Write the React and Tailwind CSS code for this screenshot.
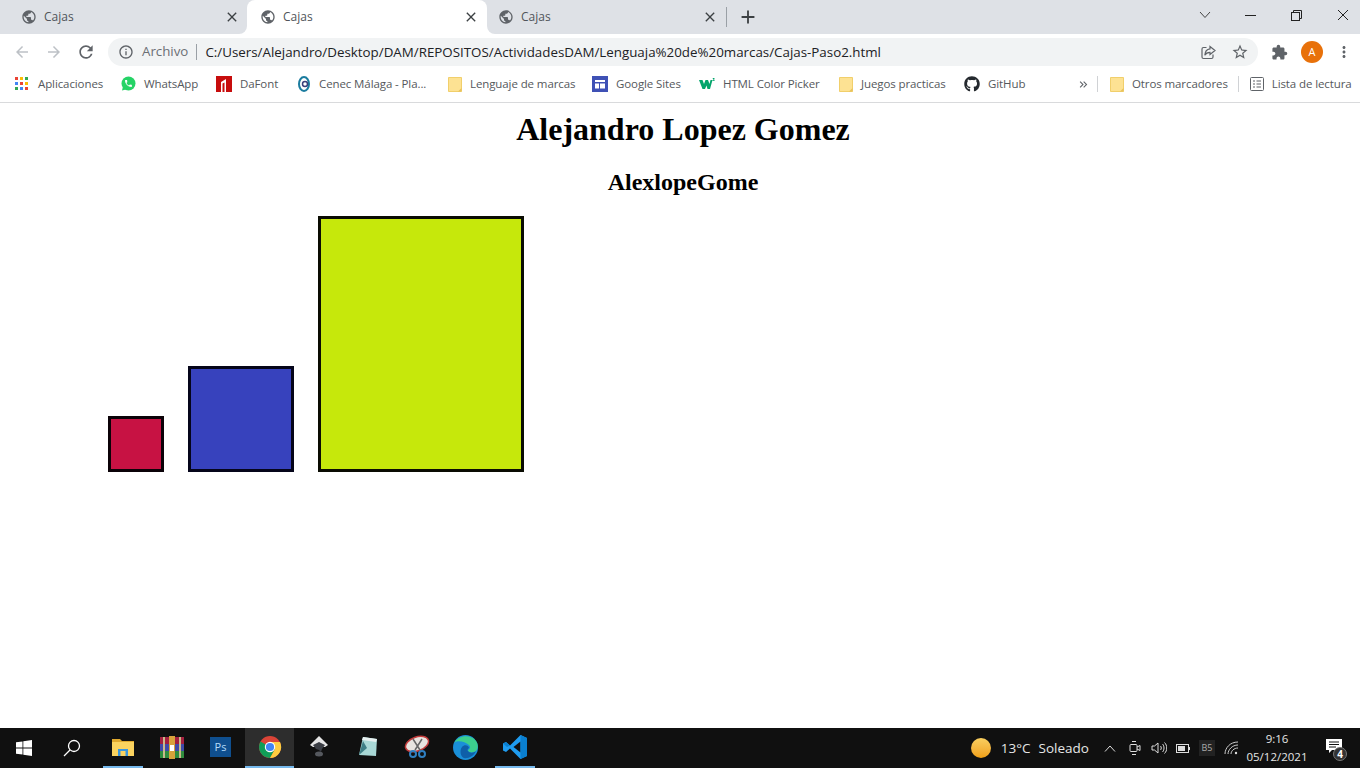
import React from 'react';
import { MdPublic, MdClose, MdAdd, MdArrowBack, MdArrowForward, MdRefresh, MdInfoOutline, MdStarBorder, MdExtension, MdMoreVert, MdKeyboardDoubleArrowRight } from 'react-icons/md';
import { FaGithub } from 'react-icons/fa';

const uiFont = "font-['Open_Sans',sans-serif]";

const Folder = () => (
    <svg width="14" height="17" viewBox="0 0 14 17">
        <path d="M0.5 1.5h13v14h-13z" fill="#fde293" stroke="#f1cf6b" />
        <path d="M10 15.5l3.5-3.5v3.5z" fill="#e8c25c" />
    </svg>
);

const AppsGrid = () => {
    const colors = ['#ea4335', '#fbbc04', '#34a853', '#4285f4', '#ea4335', '#fbbc04', '#34a853', '#4285f4', '#ea4335'];
    return (
        <div className="grid grid-cols-3 gap-[2px] w-[13px]">
            {colors.map((c, i) => (
                <span key={i} className="w-[3px] h-[3px]" style={{ backgroundColor: c }} />
            ))}
        </div>
    );
};

const WhatsAppIcon = () => (
    <svg width="15" height="15" viewBox="0 0 15 15">
        <circle cx="7.500" cy="7.500" r="7" fill="#25d366" />
        <path d="M1 14.500l1-4 3 3z" fill="#25d366" />
        <path transform="translate(2.900 2.900) scale(0.38)" fill="#fff" d="M6.620 10.790c1.440 2.830 3.760 5.140 6.590 6.590l2.200-2.200c.27-.27.67-.36 1.020-.24 1.120.37 2.330.57 3.570.57.55 0 1 .45 1 1V20c0 .55-.45 1-1 1-9.390 0-17-7.610-17-17 0-.55.45-1 1-1h3.500c.55 0 1 .45 1 1 0 1.250.2 2.450.57 3.570.11.35.03.74-.25 1.020l-2.200 2.200z" />
    </svg>
);

const DaFontIcon = () => (
    <svg width="16" height="16" viewBox="0 0 16 16">
        <rect width="16" height="16" fill="#c70d0d" />
        <path d="M5 16V6l5-3v13h-1.500V6.500L6.500 7.500V16z" fill="#fff" />
    </svg>
);

const CenecIcon = () => (
    <svg width="12" height="16" viewBox="0 0 12 16">
        <ellipse cx="6" cy="8" rx="5" ry="7" fill="none" stroke="#1b7c9f" strokeWidth="2" />
        <circle cx="7" cy="8" r="2.500" fill="none" stroke="#3a3f7a" strokeWidth="1.500" />
    </svg>
);

const SitesIcon = () => (
    <svg width="16" height="16" viewBox="0 0 16 16">
        <rect width="16" height="16" fill="#3f51b5" />
        <rect x="3" y="4" width="10" height="2" fill="#fff" />
        <rect x="3" y="7.500" width="4" height="5" fill="#fff" />
        <rect x="8" y="7.500" width="5" height="5" fill="#fff" />
    </svg>
);

const W3Icon = () => (
    <svg width="16" height="12" viewBox="0 0 16 12">
        <path d="M0 2h3.500l1.500 4 1.500-4h2.500l1.500 4 1-4h2l-2.500 9H8.500L7.500 7.500 6 11H3.500z" fill="#04a56c" />
        <path d="M13.500 0h2v.700l-1 .800h1v1.500h-2v-.700h1.200z" fill="#04a56c" />
    </svg>
);

const ListIcon = () => (
    <svg width="14" height="14" viewBox="0 0 14 14" fill="none" stroke="#5f6368">
        <rect x="0.500" y="0.500" width="13" height="13" rx="1" />
        <path d="M3 4h2M3 7h2M3 10h2M6.500 4H11M6.500 7H11M6.500 10H11" />
    </svg>
);

const ShareIcon = () => (
    <svg width="15" height="15" viewBox="0 0 15 15" fill="none" stroke="#5f6368" strokeWidth="1.200">
        <path d="M5.500 2.500H2.500a1.500 1.500 0 0 0-1.500 1.500v8a1.500 1.500 0 0 0 1.500 1.500h8a1.500 1.500 0 0 0 1.500-1.500v-2.500" />
        <path d="M9 1.500l5 4-5 4V7.300C6.500 7.300 4.800 8.300 3.800 10.300 4 6.800 6 4.300 9 3.900z" />
    </svg>
);

const Tab = ({ active, box }) => (
    <div className={`relative flex items-center shrink-0 h-full ${box} ${active ? 'bg-white rounded-t-lg' : ''}`}>
        <MdPublic size={16} color="#5f6368" />
        <span className="ml-[7px] text-xs text-[#50545a] flex-1">Cajas</span>
        <MdClose size={16} color="#3c4043" />
        {active && (
            <>
                <div className="absolute bottom-0 -left-2 w-2 h-2 bg-white">
                    <div className="w-2 h-2 bg-[#dee1e6] rounded-br-lg" />
                </div>
                <div className="absolute bottom-0 -right-2 w-2 h-2 bg-white">
                    <div className="w-2 h-2 bg-[#dee1e6] rounded-bl-lg" />
                </div>
            </>
        )}
    </div>
);

const TabStrip = () => (
    <div className="flex items-center h-[34px] bg-[#dee1e6] shrink-0">
        <Tab box="w-[247px] pl-[21px] pr-[7px]" />
        <Tab active box="w-[240px] pl-[13px] pr-[8px]" />
        <Tab box="w-[239px] pl-[11px] pr-[8px]" />
        <div className="w-px h-5 bg-[#9aa0a6]" />
        <div className="ml-[10px] w-[22px] flex justify-center">
            <MdAdd size={22} color="#3c4043" />
        </div>
        <div className="flex-1" />
        <div className="flex items-center w-[168px] h-full text-[#3c4043] pb-[4px]">
            <svg className="ml-[7px]" width="12" height="8" viewBox="0 0 12 8" fill="none" stroke="#444">
                <path d="M1 1l5 5.500L11 1" />
            </svg>
            <div className="ml-[34px] w-[11px] h-px bg-[#222]" />
            <svg className="ml-[35px]" width="11" height="11" viewBox="0 0 11 11" fill="none" stroke="#222">
                <rect x="0.500" y="2.500" width="8" height="8" />
                <path d="M2.500 2.500v-2h8v8h-2" />
            </svg>
            <svg className="ml-[35px]" width="12" height="12" viewBox="0 0 12 12" fill="none" stroke="#222">
                <path d="M1 1l10 10M11 1L1 11" />
            </svg>
        </div>
    </div>
);

const Toolbar = () => (
    <div className="flex items-center h-[36px] bg-white shrink-0">
        <div className="ml-[13px] w-[18px]"><MdArrowBack size={18} color="#bdc1c6" /></div>
        <div className="ml-[14px] w-[18px]"><MdArrowForward size={18} color="#bdc1c6" /></div>
        <div className="ml-[13px] w-[20px]"><MdRefresh size={20} color="#5f6368" /></div>
        <div className="ml-[12px] w-[1150px] h-7 rounded-full bg-[#f1f3f4] flex items-center">
            <div className="ml-[10px]"><MdInfoOutline size={16} color="#5f6368" /></div>
            <span className="ml-[8px] text-[13.3px] text-[#6b6f74]">Archivo</span>
            <div className="ml-[8px] w-px h-4 bg-[#9aa0a6]" />
            <span className="ml-[8px] text-[13.35px] text-[#202124]">C:/Users/Alejandro/Desktop/DAM/REPOSITOS/ActividadesDAM/Lenguaja%20de%20marcas/Cajas-Paso2.html</span>
            <div className="flex-1" />
            <ShareIcon />
            <div className="ml-[15px] mr-[9px]"><MdStarBorder size={18} color="#5f6368" /></div>
        </div>
        <div className="ml-[13px]"><MdExtension size={17} color="#5f6368" /></div>
        <div className="ml-[13px] w-[22px] h-[22px] rounded-full bg-[#e8710a] text-white text-[11px] flex items-center justify-center">A</div>
        <div className="ml-[12px]"><MdMoreVert size={18} color="#5f6368" /></div>
    </div>
);

const bookmarks = [
    { label: 'Aplicaciones', icon: <AppsGrid />, box: 'w-[121px] pl-[15px]', gap: 'ml-[10px]' },
    { label: 'WhatsApp', icon: <WhatsAppIcon />, box: 'w-[95px]', gap: 'ml-[8px]' },
    { label: 'DaFont', icon: <DaFontIcon />, box: 'w-[82px]', gap: 'ml-[8px]' },
    { label: 'Cenec Málaga - Pla...', icon: <CenecIcon />, box: 'w-[150px]', gap: 'ml-[9px]' },
    { label: 'Lenguaje de marcas', icon: <Folder />, box: 'w-[144px]', gap: 'ml-[8px]' },
    { label: 'Google Sites', icon: <SitesIcon />, box: 'w-[107px]', gap: 'ml-[8px]' },
    { label: 'HTML Color Picker', icon: <W3Icon />, box: 'w-[140px]', gap: 'ml-[8px]' },
    { label: 'Juegos practicas', icon: <Folder />, box: 'w-[125px]', gap: 'ml-[8px]' },
    { label: 'GitHub', icon: <FaGithub size={16} color="#24292e" />, box: 'w-[113px]', gap: 'ml-[8px]' },
];

const BookmarksBar = () => (
    <div className="flex items-center h-[33px] pb-[4px] bg-white border-b border-[#d9dadc] shrink-0 text-xs text-[#55585c]">
        {bookmarks.map(b => (
            <div key={b.label} className={`flex items-center shrink-0 whitespace-nowrap ${b.box}`}>
                {b.icon}
                <span className={`${b.gap} text-[11.5px] tracking-[-0.1px]`}>{b.label}</span>
            </div>
        ))}
        <MdKeyboardDoubleArrowRight size={13} color="#5f6368" />
        <div className="ml-[7px] w-px h-4 bg-[#d0d2d5]" />
        <div className="ml-[12px]"><Folder /></div>
        <span className="ml-[8px] text-[11.5px] tracking-[-0.1px] whitespace-nowrap">Otros marcadores</span>
        <div className="ml-[10px] w-px h-4 bg-[#d0d2d5]" />
        <div className="ml-[11px]"><ListIcon /></div>
        <span className="ml-[8px] text-[11.5px] tracking-[-0.1px] whitespace-nowrap">Lista de lectura</span>
    </div>
);

const Page = () => (
    <div className="flex-1 bg-white font-['Liberation_Serif',serif] text-black overflow-hidden">
        <div className="w-[1366px]">
            <h1 className="mt-[8px] text-[32px] leading-[37px] font-bold text-center">Alejandro Lopez Gomez</h1>
            <h2 className="mt-[20px] text-2xl leading-[28px] font-bold text-center">AlexlopeGome</h2>
            <div className="mt-[20px] ml-[108px] flex items-end gap-6">
                <div className="w-14 h-14 bg-[#c71243] border-[3px] border-[#0b0208]" />
                <div className="w-[106px] h-[106px] bg-[#3742bd] border-[3px] border-[#05051a]" />
                <div className="w-[206px] h-64 bg-[#c6e80b] border-[3px] border-[#0a0c02]" />
            </div>
        </div>
    </div>
);

const WindowsLogo = () => (
    <svg width="16" height="16" viewBox="0 0 16 16" fill="#fff">
        <path d="M0 2.300l6.500-.9v6.200H0zM7.300 1.300L16 0v7.600H7.300zM0 8.400h6.500v6.200L0 13.700zM7.300 8.400H16V16l-8.700-1.300z" />
    </svg>
);

const FilesIcon = () => (
    <svg width="22" height="20" viewBox="0 0 22 20">
        <path d="M0 2h8l2 2h12v3H0z" fill="#e0a92e" />
        <rect y="5" width="22" height="14" fill="#fbd35f" />
        <rect x="6" y="12" width="10" height="7" fill="#3a96dd" />
        <rect x="8.500" y="14" width="5" height="5" fill="#fbd35f" />
    </svg>
);

const RarIcon = () => (
    <svg width="24" height="23" viewBox="0 0 24 23">
        <rect width="24" height="7" y="1" fill="#a3203f" />
        <rect width="24" height="7" y="8" fill="#3f4aa8" />
        <rect width="24" height="7" y="15" fill="#2f8c3e" />
        <rect x="9" y="0" width="6" height="23" fill="#d7a23c" />
        <rect x="3" y="1" width="2" height="21" fill="#c9b98a" />
        <rect x="19" y="1" width="2" height="21" fill="#c9b98a" />
        <rect x="10" y="9" width="4" height="6" fill="#fff" />
    </svg>
);

const PsIcon = () => (
    <div className="w-[21px] h-[20px] bg-[#0f4f8f] text-[#b5dcfb] text-[11px] leading-[20px] text-center">Ps</div>
);

const ChromeIcon = () => (
    <svg width="24" height="24" viewBox="0 0 24 24">
        <circle cx="12" cy="12" r="11" fill="#db4437" />
        <path d="M12 12L2.500 6.500A11 11 0 0 0 12 23l5.500-9.500z" fill="#0f9d58" />
        <path d="M12 7h10a11 11 0 0 1-10 16l5-9z" fill="#ffcd40" />
        <circle cx="12" cy="12" r="5.200" fill="#fff" />
        <circle cx="12" cy="12" r="4.100" fill="#4285f4" />
    </svg>
);

const InkscapeIcon = () => (
    <svg width="20" height="22" viewBox="0 0 20 22">
        <path d="M10 0l9 9-3 2H4L1 9z" fill="#e6e6e6" />
        <path d="M4 9l6-3 6 3-3 4-1 3-2-2-3-1z" fill="#3a3d44" />
        <ellipse cx="10" cy="18" rx="4" ry="2.500" fill="#55585e" />
    </svg>
);

const NotesIcon = () => (
    <svg width="24" height="24" viewBox="0 0 24 24">
        <path d="M7 2l14 2-1 17-17-1z" fill="#a9d8d6" />
        <path d="M7 2l14 2-1 3L6 5z" fill="#e6efef" />
        <path d="M7 6L3 20l8-7z" fill="#3f7f86" />
    </svg>
);

const SnipIcon = () => (
    <svg width="26" height="24" viewBox="0 0 26 24">
        <ellipse cx="13" cy="9" rx="12" ry="7" transform="rotate(-20 13 9)" fill="#e8e4e0" stroke="#c23b3b" strokeWidth="1.500" />
        <path d="M9 4l7 11M18 4l-7 11" stroke="#666" strokeWidth="1.500" />
        <circle cx="9" cy="19" r="3" fill="none" stroke="#2f7fc1" strokeWidth="2" />
        <circle cx="18" cy="19" r="3" fill="none" stroke="#2f7fc1" strokeWidth="2" />
    </svg>
);

const EdgeIcon = () => (
    <svg width="25" height="25" viewBox="0 0 25 25">
        <circle cx="12.500" cy="12.500" r="12.500" fill="#1a8fd8" />
        <path d="M1 8C5 0 18-1 23 6c3 4 2 10-2 11-3 1-6 0-6-2 2-1 3-3 1-5C12 6 3 5 1 8z" fill="#3ccf8e" />
        <path d="M9 12c2-3 7-2 7 1-2 1-2 3 0 4 2 1 5 1 7-1-2 5-8 8-12 7-3-1-5-7-2-11z" fill="#0f5fa8" />
    </svg>
);

const VsCodeIcon = () => (
    <svg width="24" height="24" viewBox="0 0 24 24">
        <path d="M17.500 0L24 3v18l-6.500 3L7 13.500 3 17l-3-1.500v-7L3 7l4 3.500z" fill="#1f9cf0" />
        <path d="M17.500 6.500L10.500 12l7 5.500z" fill="#101010" />
        <path d="M17.500 0L24 3v18l-6.500 3z" fill="#0a7fd0" />
        <path d="M0 8.500L3 7l4 3.500-3 1.500z" fill="#0a7fd0" />
    </svg>
);

const taskbarApps = [
    { key: 'files', icon: <FilesIcon />, bar: 'w-10' },
    { key: 'rar', icon: <RarIcon /> },
    { key: 'ps', icon: <PsIcon /> },
    { key: 'chrome', icon: <ChromeIcon />, bar: 'w-full', active: true },
    { key: 'inkscape', icon: <InkscapeIcon /> },
    { key: 'notes', icon: <NotesIcon /> },
    { key: 'snip', icon: <SnipIcon /> },
    { key: 'edge', icon: <EdgeIcon /> },
    { key: 'vscode', icon: <VsCodeIcon />, bar: 'w-10' },
];

const Taskbar = () => (
    <div className="flex items-center h-10 bg-[#101010] shrink-0 text-white">
        <div className="w-12 flex justify-center"><WindowsLogo /></div>
        <div className="w-12 flex justify-center">
            <svg width="18" height="18" viewBox="0 0 18 18" fill="none" stroke="#fff" strokeWidth="1.300">
                <circle cx="11" cy="7" r="5.500" />
                <path d="M7 11l-6 6" />
            </svg>
        </div>
        <div className="ml-[2px] flex h-full">
            {taskbarApps.map(app => (
                <div key={app.key} className={`w-[49px] h-full flex flex-col items-center ${app.active ? 'bg-[#2d2d2d]' : ''}`}>
                    <div className="flex-1 flex items-center justify-center">{app.icon}</div>
                    <div className={`h-[2px] ${app.bar || ''} ${app.bar ? 'bg-[#76b9ed]' : ''}`} />
                </div>
            ))}
        </div>
        <div className="flex-1" />
        <div className="w-5 h-5 rounded-full bg-gradient-to-b from-[#f9cf5f] to-[#f0a010]" />
        <span className="ml-[10px] text-[13.5px] text-[#e6e6e6]">13°C</span>
        <span className="ml-[8px] text-[13.5px] text-[#e6e6e6]">Soleado</span>
        <svg className="ml-[15px]" width="12" height="7" viewBox="0 0 12 7" fill="none" stroke="#ddd"><path d="M1 6.500L6 1l5 5.500" /></svg>
        <svg className="ml-[13px]" width="12" height="16" viewBox="0 0 12 16" fill="none" stroke="#ddd">
            <rect x="1" y="4.500" width="7" height="7" rx="1" />
            <path d="M8 7l3-1.500v5L8 9M3 1.500h4M3 14.500h4" />
        </svg>
        <svg className="ml-[10px]" width="16" height="14" viewBox="0 0 16 14" fill="none" stroke="#ddd">
            <path d="M1 5h2.500L7 2v10L3.500 9H1zM9.500 5c1 1 1 3 0 4M11.500 3c2 2 2 6 0 8M13.500 1.500c3 3 3 8 0 11" />
        </svg>
        <svg className="ml-[9px]" width="15" height="9" viewBox="0 0 15 9" fill="none" stroke="#ddd">
            <rect x="0.500" y="0.500" width="12" height="8" />
            <rect x="2" y="2" width="7" height="5" fill="#ddd" stroke="none" />
            <path d="M13.500 3v3" />
        </svg>
        <div className="ml-[8px] w-[16px] h-[16px] bg-[#222] text-[9px] leading-[16px] text-center text-[#aaa]">B5</div>
        <svg className="ml-[9px]" width="15" height="14" viewBox="0 0 15 14" fill="none" stroke="#ccc">
            <path d="M1 13C1 7 6 1 14 1M4 13c0-4 4-9 10-9M7 13c0-3 3-6 7-6" />
            <circle cx="12" cy="12" r="1.200" fill="#ddd" stroke="none" />
        </svg>
        <div className="ml-[7px] w-[62px] flex flex-col items-center text-[11.5px] leading-[18px] text-[#e6e6e6]">
            <span>9:16</span>
            <span>05/12/2021</span>
        </div>
        <div className="relative ml-[18px] mr-[18px] w-[16px] h-[16px] mb-[2px]">
            <svg width="16" height="15" viewBox="0 0 16 15" fill="#fff">
                <path d="M0 0h16v11H6l-3 3v-3H0z" />
                <path d="M3 3h10M3 5.500h10M3 8h7" stroke="#101010" />
            </svg>
            <div className="absolute -right-[5px] -bottom-[6px] w-[14px] h-[14px] rounded-full bg-[#333] border border-[#777] text-[10px] leading-[12px] text-center font-bold">4</div>
        </div>
    </div>
);

const App = () => (
    <div className={`flex flex-col h-screen w-screen overflow-hidden bg-white ${uiFont}`}>
        <TabStrip />
        <Toolbar />
        <BookmarksBar />
        <Page />
        <Taskbar />
    </div>
);

export default App;
